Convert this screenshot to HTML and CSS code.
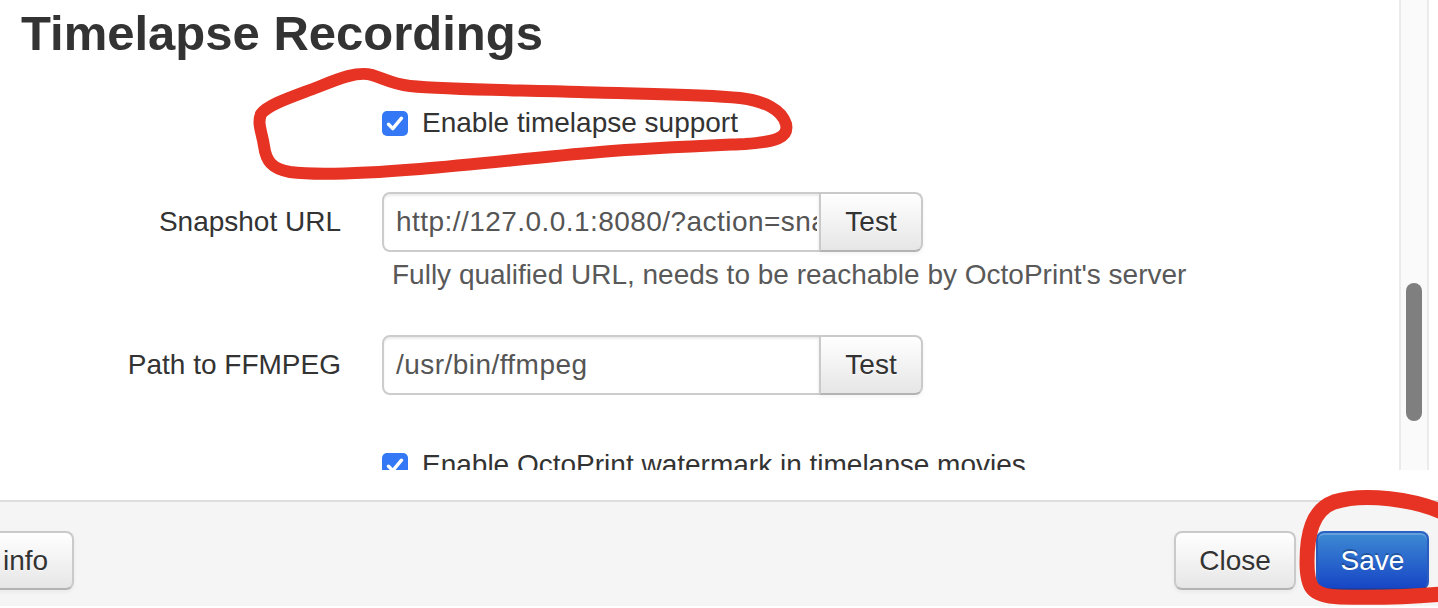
FILE: index.html
```html
<!DOCTYPE html>
<html lang="en">
<head>
<meta charset="utf-8">
<title>Timelapse Recordings</title>
<link rel="stylesheet" href="styles.css">
</head>
<body>
<div class="modal">
  <div class="modal-body">
    <div class="scroller">
      <div class="content">
        <h3 class="title">Timelapse Recordings</h3>

        <div class="group group-check g1">
          <div class="controls">
            <label class="check-row">
              <svg class="cb" width="26" height="25" viewBox="0 0 26 25"><rect x="0" y="0" width="26" height="25" rx="5" fill="#3478f6"/><path d="M6.5 13.2 L10.8 17.6 L19.5 7.2" fill="none" stroke="#fff" stroke-width="3.4" stroke-linecap="round" stroke-linejoin="round"/></svg>
              <span>Enable timelapse support</span>
            </label>
          </div>
        </div>

        <div class="group g2">
          <div class="label">Snapshot URL</div>
          <div class="controls">
            <div class="input-append">
              <input class="field" type="text" value="http://127.0.0.1:8080/?action=snapshot">
              <button class="btn btn-test">Test</button>
            </div>
            <div class="help">Fully qualified URL, needs to be reachable by OctoPrint's server</div>
          </div>
        </div>

        <div class="group g3">
          <div class="label">Path to FFMPEG</div>
          <div class="controls">
            <div class="input-append">
              <input class="field" type="text" value="/usr/bin/ffmpeg">
              <button class="btn btn-test">Test</button>
            </div>
          </div>
        </div>

        <div class="group group-check g4">
          <div class="controls">
            <label class="check-row">
              <svg class="cb" width="26" height="25" viewBox="0 0 26 25"><rect x="0" y="0" width="26" height="25" rx="5" fill="#3478f6"/><path d="M6.5 13.2 L10.8 17.6 L19.5 7.2" fill="none" stroke="#fff" stroke-width="3.4" stroke-linecap="round" stroke-linejoin="round"/></svg>
              <span>Enable OctoPrint watermark in timelapse movies</span>
            </label>
          </div>
        </div>
      </div>
      <div class="track"><div class="thumb"></div></div>
    </div>
  </div>
  <div class="modal-footer">
    <button class="btn btn-sysinfo">info</button>
    <div class="footer-right">
      <button class="btn btn-close">Close</button>
      <button class="btn btn-primary btn-save">Save</button>
    </div>
  </div>
</div>

<svg class="annotations" width="1438" height="608" viewBox="0 0 1438 608">
  <path d="M372 75 C385 79 392 84 410 86 C450 90 520 90 580 92 C640 94 700 94 740 98 C765 101 782 110 786 124 C789 138 775 142 745 144 C700 146 650 148 600 152 C540 157 480 164 420 169 C370 173 320 176 290 172 C272 169 266 161 264 146 C262 132 257 124 261 114 C269 104 292 97 318 87 C340 78 358 71 372 75 Z" fill="none" stroke="#e63323" stroke-width="12" stroke-linecap="round" stroke-linejoin="round"/>
  <path d="M1442 512 C1415 500 1365 492 1334 502 C1312 510 1307 535 1307 562 C1307 588 1312 596 1340 597 C1380 598 1420 596 1442 594" fill="none" stroke="#e63323" stroke-width="15" stroke-linecap="round" stroke-linejoin="round"/>
</svg>
</body>
</html>
```

FILE: styles.css
```css
html, body {
  margin: 0;
  padding: 0;
  background: #ffffff;
}

body {
  width: 1438px;
  height: 608px;
  overflow: hidden;
  position: relative;
  font-family: "Liberation Sans", Arial, Helvetica, sans-serif;
  font-size: 28px;
  line-height: 40px;
  color: #333333;
}

.modal-body {
  padding-bottom: 30px;
  background: #ffffff;
}

.scroller {
  height: 470px;
  display: flex;
  overflow: hidden;
}

.content {
  flex: 1;
  min-width: 0;
  padding-left: 21px;
}

.track {
  width: 26px;
  margin-right: 9px;
  background: #fafafa;
  border-left: 2px solid #ebebeb;
  border-right: 2px solid #ebebeb;
  display: flex;
  flex-direction: column;
  align-items: center;
}

.thumb {
  margin-top: 283px;
  width: 16px;
  height: 138px;
  border-radius: 8px;
  background: #7f7f7f;
}

.title {
  font-size: 49px;
  font-weight: bold;
  line-height: 54px;
  margin: 6px 0 33px;
  color: #333333;
}

.group {
  display: grid;
  grid-template-columns: 320px 1fr;
  column-gap: 41px;
}

.group-check .controls {
  grid-column: 2;
  padding-top: 10px;
}

.g1 { margin-bottom: 49px; }
.g2 { margin-bottom: 40px; }
.g3 { margin-bottom: 40px; }

.label {
  text-align: right;
  padding-top: 10px;
  white-space: nowrap;
}

.check-row {
  display: flex;
  align-items: center;
  gap: 14px;
  height: 40px;
  white-space: nowrap;
}

.cb {
  flex: none;
}

.input-append {
  display: flex;
  height: 60px;
}

.field {
  box-sizing: border-box;
  width: 439px;
  height: 60px;
  margin: 0;
  padding: 0 2px 0 12px;
  border: 2px solid #cccccc;
  border-radius: 8px 0 0 8px;
  background: #ffffff;
  box-shadow: inset 0 2px 2px rgba(0, 0, 0, 0.075);
  font-family: "Liberation Sans", Arial, Helvetica, sans-serif;
  font-size: 28px;
  letter-spacing: 0.45px;
  color: #555555;
  outline: none;
}

.help {
  margin-top: 3px;
  padding-left: 10px;
  color: #595959;
  white-space: nowrap;
}

.btn {
  box-sizing: border-box;
  height: 59px;
  margin: 0;
  padding: 0 24px;
  font-family: "Liberation Sans", Arial, Helvetica, sans-serif;
  font-size: 28px;
  line-height: 40px;
  color: #333333;
  text-align: center;
  border: 2px solid #cacaca;
  border-bottom-color: #b3b3b3;
  border-radius: 8px;
  background: linear-gradient(to bottom, #ffffff, #e6e6e6);
  box-shadow: inset 0 2px 0 rgba(255, 255, 255, 0.2), 0 2px 4px rgba(0, 0, 0, 0.05);
  text-shadow: 0 1px 1px rgba(255, 255, 255, 0.75);
}

.btn-test {
  width: 104px;
  height: 60px;
  margin-left: -2px;
  padding: 0;
  border-radius: 0 8px 8px 0;
}

.modal-footer {
  box-sizing: border-box;
  height: 106px;
  border-top: 2px solid #dedede;
  background: #f5f5f5;
  padding: 29px 9px 0 0;
  display: flex;
  justify-content: space-between;
  align-items: flex-start;
}

.footer-right {
  display: flex;
  gap: 20px;
}

.btn-sysinfo {
  width: 97px;
  margin-left: -23px;
  text-align: right;
  padding-right: 24px;
}

.btn-close {
  width: 122px;
  padding: 0;
}

.btn-save {
  width: 113px;
  padding: 0;
}

.btn-primary {
  color: #ffffff;
  background: linear-gradient(to bottom, #3d8ad3, #1746c6);
  border-color: #2a63c4 #2a5cc0 #1a3f9e;
  text-shadow: 0 -2px 0 rgba(0, 0, 0, 0.25);
}

.annotations {
  position: absolute;
  top: 0;
  left: 0;
  pointer-events: none;
}
```
